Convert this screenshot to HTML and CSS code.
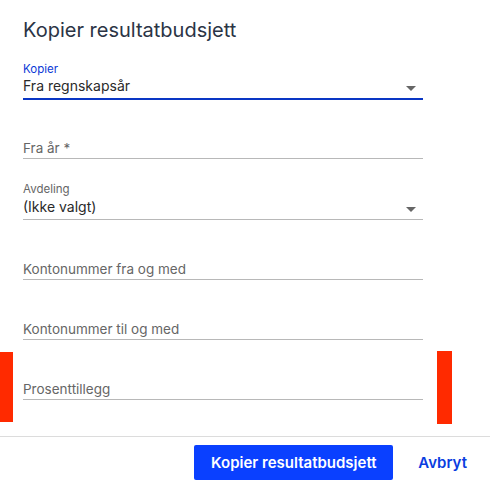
FILE: index.html
```html
<!DOCTYPE html>
<html lang="no">
<head>
<meta charset="utf-8">
<link rel="stylesheet" href="styles.css">
</head>
<body>
<div class="dialog">
  <div class="content">
    <h1 class="title">Kopier resultatbudsjett</h1>
    <div class="field field-active">
      <div class="label label-active">Kopier</div>
      <div class="value">Fra regnskapsår <span class="caret"></span></div>
    </div>
    <div class="field field-short">
      <div class="placeholder">Fra år *</div>
    </div>
    <div class="field field-tall">
      <div class="label">Avdeling</div>
      <div class="value">(Ikke valgt) <span class="caret"></span></div>
    </div>
    <div class="field">
      <div class="placeholder">Kontonummer fra og med</div>
    </div>
    <div class="field">
      <div class="placeholder">Kontonummer til og med</div>
    </div>
    <div class="field">
      <div class="placeholder">Prosenttillegg</div>
    </div>
    <div class="mark mark-left"></div>
    <div class="mark mark-right"></div>
  </div>
  <div class="footer">
    <button class="btn-primary">Kopier resultatbudsjett</button>
    <button class="btn-link">Avbryt</button>
  </div>
</div>
</body>
</html>
```

FILE: styles.css
```css
* { box-sizing: border-box; }
html, body { margin: 0; padding: 0; background: #fff; }
body {
  font-family: Inter, "Noto Sans", "Liberation Sans", sans-serif;
  width: 490px;
  height: 488px;
  overflow: hidden;
}
.dialog { width: 490px; }
.content {
  position: relative;
  padding: 0 67px 0 23px;
  height: 436px;
}
.title {
  margin: 0;
  padding-top: 19px;
  height: 40px;
  font-size: 20px;
  line-height: 22px;
  font-weight: 400;
  color: #2b3445;
}
.field {
  height: 60px;
  border-bottom: 1px solid #b8b8b8;
  display: flex;
  flex-direction: column;
  justify-content: flex-end;
  padding-bottom: 0;
}
.field-short { height: 59px; }
.field-tall { height: 61px; padding-bottom: 2px; }
.field-active {
  border-bottom: 2px solid #0a36c4;
  padding-bottom: 2px;
}
.label {
  font-size: 11.5px;
  line-height: 14px;
  color: #666;
}
.field-tall .label { margin-bottom: 1px; }
.label-active { color: #0b3ad6; }
.value {
  position: relative;
  font-size: 14px;
  line-height: 20px;
  color: #2a2a2a;
}
.placeholder {
  font-size: 13.5px;
  line-height: 20px;
  color: #666;
}
.caret {
  position: absolute;
  right: 7px;
  top: 10px;
  width: 0;
  height: 0;
  border-left: 5px solid transparent;
  border-right: 5px solid transparent;
  border-top: 5px solid #666;
}
.mark {
  position: absolute;
  background: #ff2a00;
}
.mark-left { left: 0; top: 352px; width: 13px; height: 70px; }
.mark-right { left: 437px; top: 351px; width: 15px; height: 73px; }
.footer {
  border-top: 1px solid #dcdcdc;
  display: flex;
  justify-content: flex-end;
  align-items: center;
  padding: 8px 23px 0 0;
  gap: 25px;
}
.btn-primary {
  background: #0a40ff;
  color: #fff;
  border: none;
  border-radius: 2px;
  width: 199px;
  height: 35px;
  font-family: inherit;
  font-size: 15px;
  font-weight: 600;
  padding: 0;
}
.btn-link {
  background: none;
  border: none;
  padding: 0;
  color: #0a3de0;
  font-family: inherit;
  font-size: 15px;
  font-weight: 600;
}
```
